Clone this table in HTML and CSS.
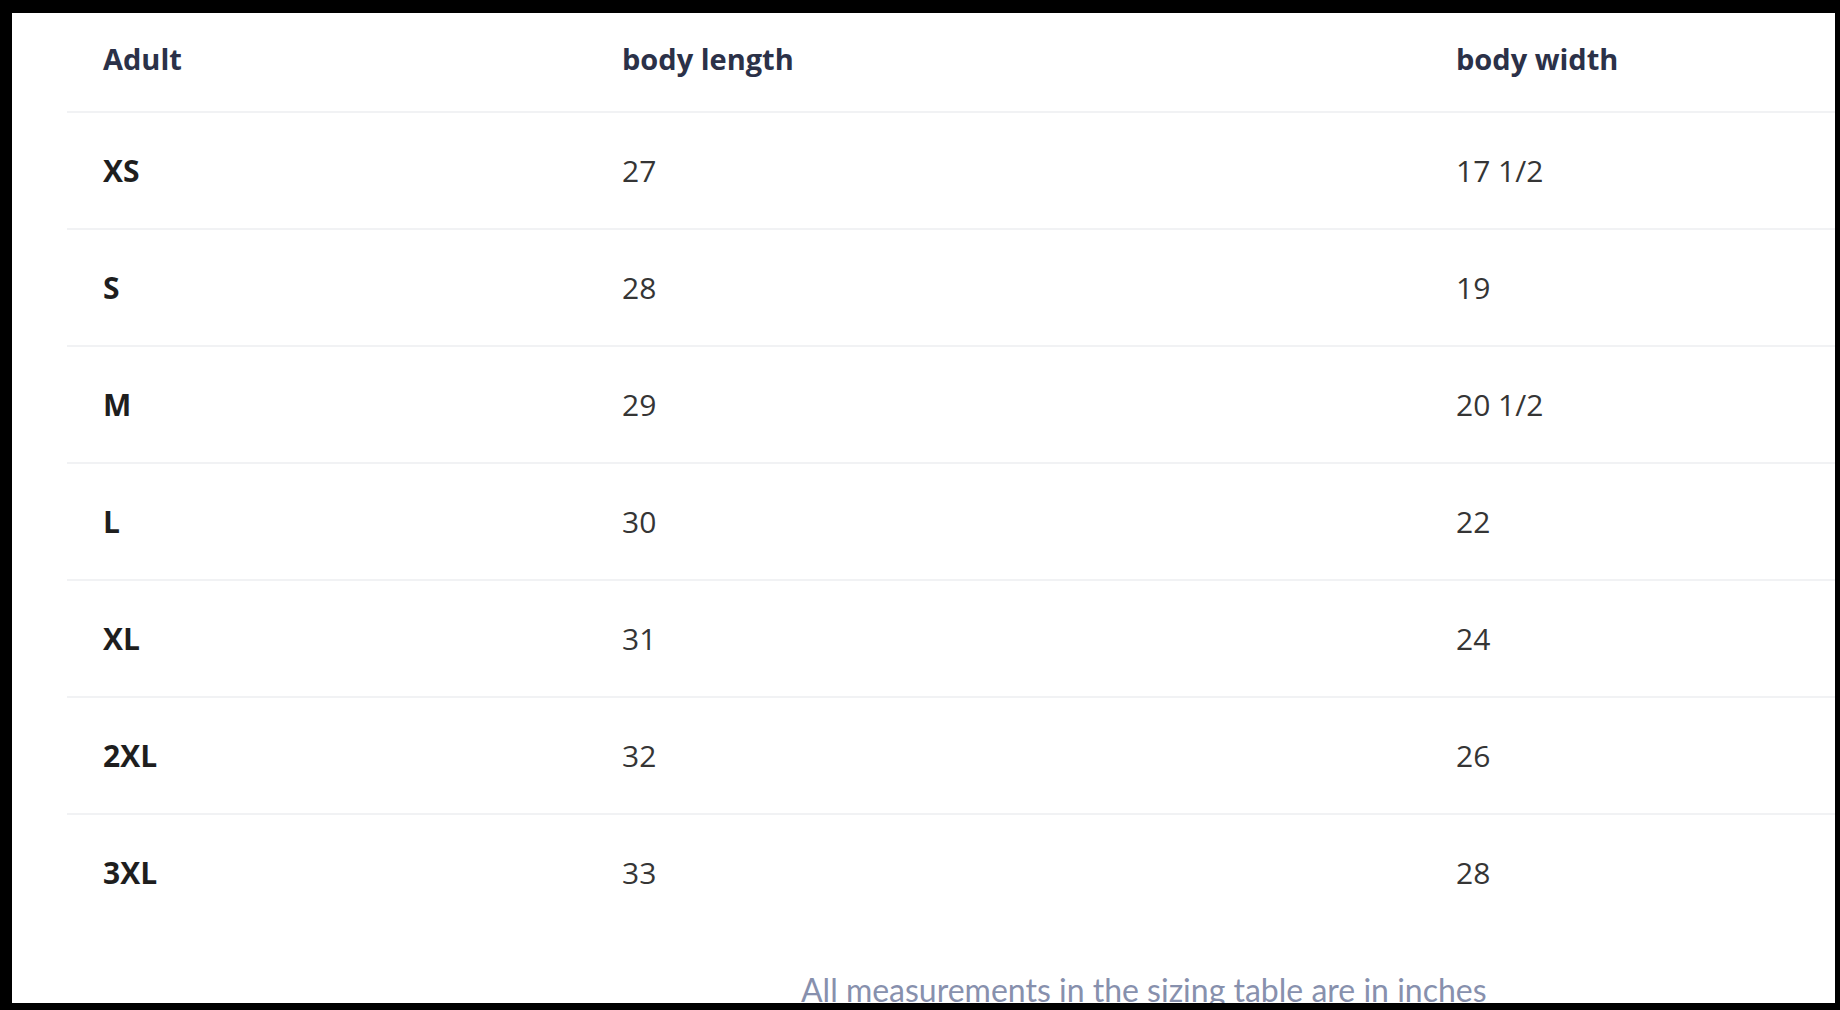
FILE: index.html
```html
<!DOCTYPE html>
<html lang="en">
<head>
<meta charset="utf-8">
<title>Sizing table</title>
<link rel="stylesheet" href="styles.css">
</head>
<body>
<div class="frame">
  <table class="sizes">
    <colgroup>
      <col class="c1"><col class="c2"><col class="c3">
    </colgroup>
    <thead>
      <tr><th>Adult</th><th>body length</th><th>body width</th></tr>
    </thead>
    <tbody>
      <tr><td class="size">XS</td><td>27</td><td>17 1/2</td></tr>
      <tr><td class="size">S</td><td>28</td><td>19</td></tr>
      <tr><td class="size">M</td><td>29</td><td>20 1/2</td></tr>
      <tr><td class="size">L</td><td>30</td><td>22</td></tr>
      <tr><td class="size">XL</td><td>31</td><td>24</td></tr>
      <tr><td class="size">2XL</td><td>32</td><td>26</td></tr>
      <tr><td class="size">3XL</td><td>33</td><td>28</td></tr>
    </tbody>
  </table>
  <p class="note">All measurements in the sizing table are in inches</p>
</div>
</body>
</html>
```

FILE: styles.css
```css
html, body {
  margin: 0;
  padding: 0;
  background: #000;
  height: 1010px;
  overflow: hidden;
}

.frame {
  margin: 13px 5px 0 12px;
  height: 990px;
  background: #fff;
  padding-left: 55px;
  overflow: hidden;
  font-family: "Open Sans", "Noto Sans", sans-serif;
}

.sizes {
  width: 1768px;
  table-layout: fixed;
  border-collapse: collapse;
}

.c1 { width: 519px; }
.c2 { width: 834px; }
.c3 { width: 415px; }

.sizes th {
  height: 99px;
  padding: 0 0 8px 36px;
  box-sizing: border-box;
  text-align: left;
  vertical-align: middle;
  font-size: 29px;
  font-weight: 700;
  color: #2b3148;
  border-bottom: 2px solid #f1f2f4;
}

.sizes td {
  height: 115px;
  padding: 0 0 0 36px;
  vertical-align: middle;
  font-size: 30px;
  font-weight: 400;
  color: #353535;
  border-bottom: 2px solid #f1f2f4;
}

.sizes tbody tr:last-child td {
  border-bottom: none;
}

.sizes td.size {
  font-weight: 700;
  color: #1e1e1e;
}

.note {
  margin: 45px 0 0 734px;
  font-family: Lato, "Open Sans", sans-serif;
  font-size: 32px;
  line-height: 30px;
  color: #8790ad;
  white-space: nowrap;
}
```
